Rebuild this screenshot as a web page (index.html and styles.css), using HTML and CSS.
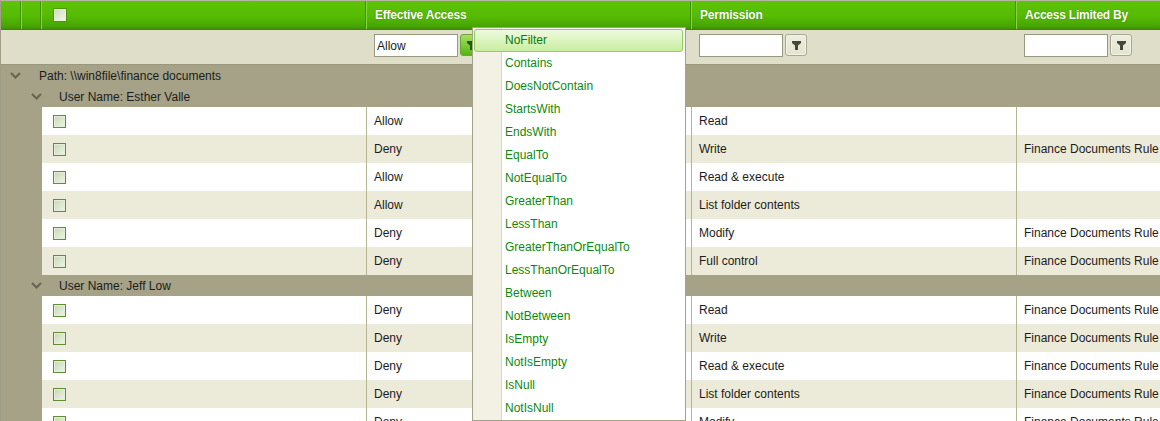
FILE: index.html
```html
<!DOCTYPE html>
<html lang="en">
<head>
<meta charset="utf-8">
<title>Effective Access</title>
<link rel="stylesheet" href="styles.css">
</head>
<body>
<svg class="defs" width="0" height="0" aria-hidden="true">
  <symbol id="funnel" viewBox="0 0 9 9"><path d="M0 0H9V2L6 4.5V9H3V4.5L0 2Z"/></symbol>
  <symbol id="chev" viewBox="0 0 11 7"><path d="M1 1L5.5 5.5L10 1" fill="none" stroke="currentColor" stroke-width="2"/></symbol>
</svg>
<div class="grid">
  <div class="head">
    <div class="h-ind"></div><div class="h-ind"></div>
    <div class="h-cell h-check"><span class="check head-check"></span></div>
    <div class="h-cell col">Effective Access</div>
    <div class="h-cell col">Permission</div>
    <div class="h-cell col-last">Access Limited By</div>
  </div>
  <div class="filters">
    <div class="f-cell f-check"></div>
    <div class="f-cell col"><input class="f-input" type="text" value="Allow"><span class="f-btn f-btn-on"><svg class="funnel"><use href="#funnel"/></svg></span></div>
    <div class="f-cell col"><input class="f-input" type="text"><span class="f-btn"><svg class="funnel"><use href="#funnel"/></svg></span></div>
    <div class="f-cell col-last"><input class="f-input" type="text"><span class="f-btn"><svg class="funnel"><use href="#funnel"/></svg></span></div>
  </div>
  <div class="group group-path"><svg class="chev"><use href="#chev"/></svg><span>Path: \\win8file\finance documents</span></div>
  <div class="group group-user"><svg class="chev"><use href="#chev"/></svg><span>User Name: Esther Valle</span></div>
  <div class="row"><div class="c-check"><span class="check"></span></div><div class="cell col">Allow</div><div class="cell col">Read</div><div class="cell col-last"></div></div>
  <div class="row alt"><div class="c-check"><span class="check"></span></div><div class="cell col">Deny</div><div class="cell col">Write</div><div class="cell col-last">Finance Documents Rule</div></div>
  <div class="row"><div class="c-check"><span class="check"></span></div><div class="cell col">Allow</div><div class="cell col">Read &amp; execute</div><div class="cell col-last"></div></div>
  <div class="row alt"><div class="c-check"><span class="check"></span></div><div class="cell col">Allow</div><div class="cell col">List folder contents</div><div class="cell col-last"></div></div>
  <div class="row"><div class="c-check"><span class="check"></span></div><div class="cell col">Deny</div><div class="cell col">Modify</div><div class="cell col-last">Finance Documents Rule</div></div>
  <div class="row alt"><div class="c-check"><span class="check"></span></div><div class="cell col">Deny</div><div class="cell col">Full control</div><div class="cell col-last">Finance Documents Rule</div></div>
  <div class="group group-user"><svg class="chev"><use href="#chev"/></svg><span>User Name: Jeff Low</span></div>
  <div class="row"><div class="c-check"><span class="check"></span></div><div class="cell col">Deny</div><div class="cell col">Read</div><div class="cell col-last">Finance Documents Rule</div></div>
  <div class="row alt"><div class="c-check"><span class="check"></span></div><div class="cell col">Deny</div><div class="cell col">Write</div><div class="cell col-last">Finance Documents Rule</div></div>
  <div class="row"><div class="c-check"><span class="check"></span></div><div class="cell col">Deny</div><div class="cell col">Read &amp; execute</div><div class="cell col-last">Finance Documents Rule</div></div>
  <div class="row alt"><div class="c-check"><span class="check"></span></div><div class="cell col">Deny</div><div class="cell col">List folder contents</div><div class="cell col-last">Finance Documents Rule</div></div>
  <div class="row"><div class="c-check"><span class="check"></span></div><div class="cell col">Deny</div><div class="cell col">Modify</div><div class="cell col-last">Finance Documents Rule</div></div>
  <ul class="menu">
    <li class="menu-item selected">NoFilter</li>
    <li class="menu-item">Contains</li>
    <li class="menu-item">DoesNotContain</li>
    <li class="menu-item">StartsWith</li>
    <li class="menu-item">EndsWith</li>
    <li class="menu-item">EqualTo</li>
    <li class="menu-item">NotEqualTo</li>
    <li class="menu-item">GreaterThan</li>
    <li class="menu-item">LessThan</li>
    <li class="menu-item">GreaterThanOrEqualTo</li>
    <li class="menu-item">LessThanOrEqualTo</li>
    <li class="menu-item">Between</li>
    <li class="menu-item">NotBetween</li>
    <li class="menu-item">IsEmpty</li>
    <li class="menu-item">NotIsEmpty</li>
    <li class="menu-item">IsNull</li>
    <li class="menu-item">NotIsNull</li>
  </ul>
</div>
</body>
</html>
```
FILE: styles.css
```css
html, body { margin: 0; padding: 0; height: 421px; overflow: hidden; }
body { font: 12px "Liberation Sans", Arial, sans-serif; color: #1c1c1c; background: #a5a287; }
.defs { position: absolute; }
.grid { position: relative; width: 1160px; height: 421px; overflow: hidden; border-left: 1px solid #a09e86; border-top: 1px solid #b5b5a0; box-sizing: border-box; }
.col { width: 325px; flex: none; box-sizing: border-box; border-right: 1px solid #b5b593; padding-left: 7px; }
.col-last { flex: 1; min-width: 0; padding-left: 7px; white-space: nowrap; overflow: hidden; }

.head { display: flex; height: 28px; background: linear-gradient(#5dc406, #55ba03 55%, #48a502 90%, #3f8f02); border-bottom: 1px solid #3c8a00; box-sizing: content-box; color: #fff; font-weight: bold; letter-spacing: -0.22px; text-shadow: 0 0 1px rgba(40,90,0,.8); }
.h-ind { width: 20px; flex: none; border-right: 1px solid #8ad24a; box-shadow: inset -1px 0 0 #3f9102; }
.head .h-ind:nth-child(2) { width: 19px; }
.h-cell { display: flex; align-items: center; height: 28px; box-sizing: border-box; }
.h-cell.col { border-right: 1px solid #8ad24a; box-shadow: inset -1px 0 0 #3f9102; }
.h-cell.col, .h-cell.col-last { padding-left: 8px; }
.h-check { width: 325px; flex: none; padding-left: 12px; border-right: 1px solid #8ad24a; box-shadow: inset -1px 0 0 #3f9102; }

.filters { display: flex; height: 34px; background: #dfdfc9; border-bottom: 1px solid #99977d; box-sizing: content-box; }
.f-check { width: 365px; flex: none; }
.f-cell { display: flex; align-items: flex-start; padding-top: 4px; box-sizing: border-box; height: 34px; }
.f-cell.col, .f-cell.col-last { padding-left: 8px; }
.f-cell.col { border-right: 1px solid #dfdfc9; }
.f-input { width: 84px; height: 23px; box-sizing: border-box; margin: 0; padding: 0 2px; border: 1px solid #9a9880; background: #fff; font: 12px "Liberation Sans", Arial, sans-serif; color: #1c1c1c; border-radius: 0; outline: none; }
.f-btn { width: 22px; height: 22px; margin-left: 2px; box-sizing: border-box; border: 1px solid #a9a793; border-radius: 3px; background: linear-gradient(#eeeedf, #e3e3d0); box-shadow: inset 0 0 0 1px #f3f3e8; display: flex; align-items: center; justify-content: center; color: #46463a; }
.f-btn-on { background: linear-gradient(#a6e05e, #56b512); border-color: #6aa63a; box-shadow: none; color: #235c00; }
.funnel { width: 9px; height: 9px; fill: currentColor; }

.group { height: 21px; display: flex; align-items: center; background: #a5a287; color: #1c1c1c; }
.chev { width: 11px; height: 7px; color: #67654f; flex: none; }
.group-path { padding-left: 9px; }
.group-path span { margin-left: 18px; }
.group-user { padding-left: 30px; }
.group-user span { margin-left: 17px; }

.row { display: flex; height: 28px; margin-left: 41px; background: #fff; align-items: stretch; }
.row.alt { background: #ecead8; }
.c-check { width: 325px; flex: none; box-sizing: border-box; padding-left: 11px; border-right: 1px solid #b5b593; display: flex; align-items: center; }
.cell { display: flex; align-items: center; }
.check { display: block; width: 13px; height: 13px; box-sizing: border-box; border: 1px solid #5f8f35; background: linear-gradient(135deg, #c5d9b0, #eef4e6); box-shadow: inset 0 0 0 1px #e6eedb; }
.head-check { border-color: #e6efdc; background: linear-gradient(135deg, #cfe0bd, #f0f5ea); box-shadow: 0 0 0 1px #4c9a0c; width: 12px; height: 12px; }

.menu { position: absolute; left: 471px; top: 26px; width: 214px; height: 394px; box-sizing: border-box; margin: 0; padding: 1px 2px 0 1px; list-style: none; border: 1px solid #a4a28c; background: linear-gradient(90deg, #f2f1e3 0, #f2f1e3 28px, #d8d8c2 28px, #d8d8c2 29px, #fff 29px); }
.menu-item { height: 23px; line-height: 23px; padding-left: 31px; color: #0d8a0d; white-space: nowrap; box-sizing: border-box; }
.menu-item.selected { border: 1px solid #8fcf5c; border-radius: 3px; line-height: 21px; padding-left: 30px; background: linear-gradient(#eefadf, #c9eda0); color: #0d7a0d; }
```
